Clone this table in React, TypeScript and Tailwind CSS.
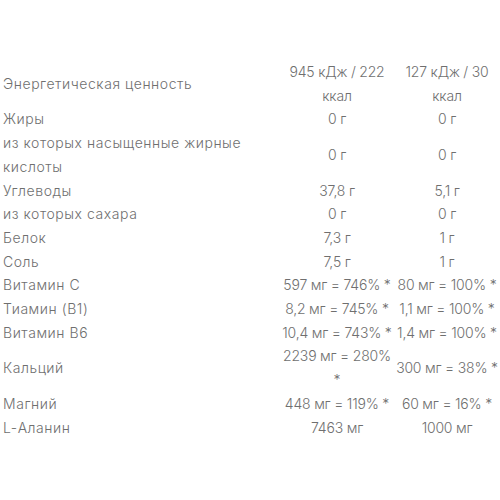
import React from "react"

type Row = { label: React.ReactNode; a: React.ReactNode; b: React.ReactNode }

const rows: Row[] = [
  { label: "Энергетическая ценность", a: <>945 кДж / 222<br />ккал</>, b: <>127 кДж / 30<br />ккал</> },
  { label: "Жиры", a: "0 г", b: "0 г" },
  { label: <>из которых насыщенные жирные<br />кислоты</>, a: "0 г", b: "0 г" },
  { label: "Углеводы", a: "37,8 г", b: "5,1 г" },
  { label: "из которых сахара", a: "0 г", b: "0 г" },
  { label: "Белок", a: "7,3 г", b: "1 г" },
  { label: "Соль", a: "7,5 г", b: "1 г" },
  { label: "Витамин C", a: "597 мг = 746% *", b: "80 мг = 100% *" },
  { label: "Тиамин (B1)", a: "8,2 мг = 745% *", b: "1,1 мг = 100% *" },
  { label: "Витамин B6", a: "10,4 мг = 743% *", b: "1,4 мг = 100% *" },
  { label: "Кальций", a: <>2239 мг = 280%<br />*</>, b: "300 мг = 38% *" },
  { label: "Магний", a: "448 мг = 119% *", b: "60 мг = 16% *" },
  { label: "L-Аланин", a: "7463 мг", b: "1000 мг" },
]

export default function App() {
  return (
    <div className="w-[500px] h-[500px] bg-white pt-[60px] overflow-hidden">
      <div
        className="grid grid-cols-[280px_114px_106px] text-[14px] leading-[23.7px] text-[#6f6f6f] font-light whitespace-nowrap"
        style={{ fontFamily: "Inter, 'Noto Sans', sans-serif" }}
      >
        {rows.map((r, i) => (
          <React.Fragment key={i}>
            <div className="flex items-center pl-[3px] tracking-[0.55px]">{r.label}</div>
            <div className="flex items-center justify-center text-center tracking-[-0.2px]">{r.a}</div>
            <div className="flex items-center justify-center text-center tracking-[-0.2px]">{r.b}</div>
          </React.Fragment>
        ))}
      </div>
    </div>
  )
}
